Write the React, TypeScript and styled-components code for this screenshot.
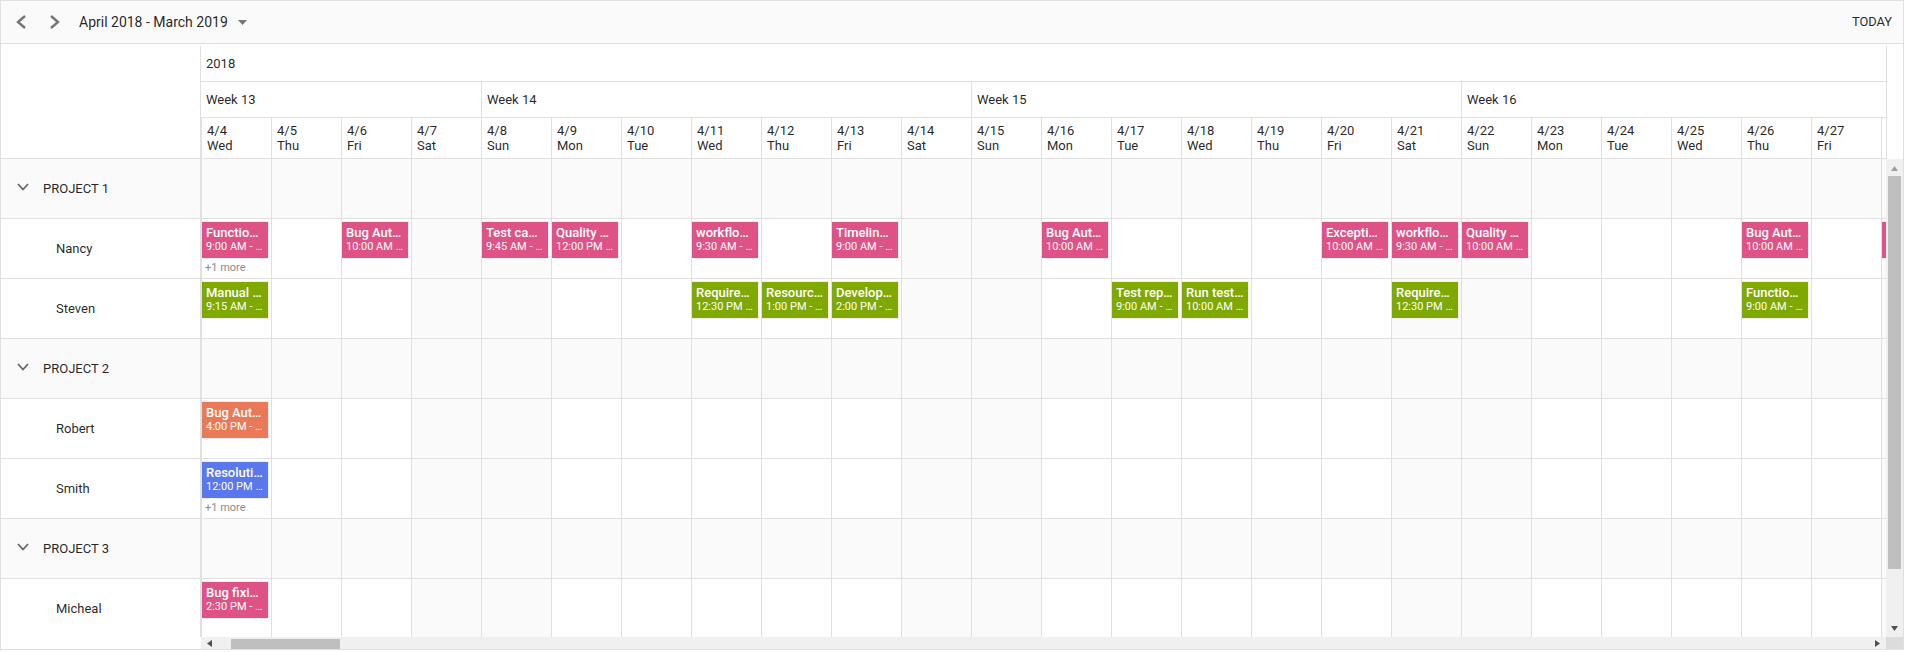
import React from "react";
import styled, { createGlobalStyle } from "styled-components";

const Global = createGlobalStyle`
  html, body { margin: 0; padding: 0; background: #fff; }
  body { font-family: Roboto, "Liberation Sans", sans-serif; color: rgba(0,0,0,.87); }
`;

const LINE = "#e0e0e0";
const SHADE = "#fafafa";

const Scheduler = styled.div`
  box-sizing: border-box;
  width: 1904px;
  height: 650px;
  border: 1px solid ${LINE};
  display: flex;
  flex-direction: column;
  overflow: hidden;
`;

const Toolbar = styled.div`
  box-sizing: border-box;
  flex: none;
  height: 43px;
  background: ${SHADE};
  border-bottom: 1px solid ${LINE};
  display: flex;
  align-items: center;
  padding: 0 11px 0 15px;
`;
const NavButton = styled.svg`
  flex: none;
  width: 10px;
  height: 14px;
  margin-right: ${(p: { $gap: number }) => p.$gap}px;
  fill: none;
  stroke: #757575;
  stroke-width: 2.4;
`;
const RangeLabel = styled.span`
  font-size: 14px;
  line-height: 20px;
`;
const Caret = styled.svg`
  flex: none;
  width: 9px;
  height: 5px;
  margin-left: 10px;
  fill: #757575;
`;
const Today = styled.span`
  margin-left: auto;
  font-size: 12.8px;
  line-height: 20px;
`;

const HeaderArea = styled.div`
  flex: none;
  display: flex;
  margin-top: 2px;
  height: 113px;
`;
const HeaderCorner = styled.div`
  box-sizing: border-box;
  flex: none;
  width: 200px;
  border-right: 1px solid ${LINE};
  border-bottom: 1px solid ${LINE};
`;
const HeaderRight = styled.div`
  box-sizing: border-box;
  flex: none;
  width: 1686px;
  border-right: 1px solid ${LINE};
  border-bottom: 1px solid ${LINE};
  overflow: hidden;
`;
const HeaderRow = styled.div`
  box-sizing: border-box;
  display: flex;
  height: ${(p: { $h: number }) => p.$h}px;
  border-bottom: 1px solid ${LINE};
  font-size: 13px;
`;
const DateRow = styled.div`
  display: flex;
  height: 40px;
  font-size: 13px;
  line-height: 15px;
`;
const YearCell = styled.div`
  padding-left: 5px;
  line-height: 35px;
`;
const WeekCell = styled.div`
  box-sizing: border-box;
  flex: none;
  width: ${(p: { $w: number }) => p.$w}px;
  padding-left: 5px;
  line-height: 35px;
  border-right: 1px solid ${LINE};
`;
const DateCell = styled.div<{ $first: boolean }>`
  box-sizing: border-box;
  flex: none;
  width: ${(p) => (p.$first ? 71 : 70)}px;
  padding: 5px 0 0 5px;
  border-right: 1px solid ${LINE};
  border-left: ${(p) => (p.$first ? `1px solid ${LINE}` : "none")};
`;

const Body = styled.div`
  flex: none;
  display: flex;
  height: 490px;
`;
const MainColumn = styled.div`
  flex: none;
  width: 1885px;
  display: flex;
  flex-direction: column;
`;
const RowsViewport = styled.div`
  flex: none;
  height: 478px;
  overflow: hidden;
`;
const Row = styled.div`
  display: flex;
  height: 60px;
  width: 3000px;
`;
const RowLabel = styled.div<{ $project: boolean }>`
  box-sizing: border-box;
  flex: none;
  width: 201px;
  display: flex;
  align-items: center;
  padding-left: ${(p) => (p.$project ? 16 : 55)}px;
  font-size: 13px;
  background: ${(p) => (p.$project ? SHADE : "#fff")};
  border-right: 2px solid ${LINE};
  border-bottom: 1px solid ${LINE};
  text-transform: ${(p) => (p.$project ? "uppercase" : "none")};
`;
const Expander = styled.svg`
  flex: none;
  width: 12px;
  height: 8px;
  margin: 0 14px 4px 0;
  fill: none;
  stroke: #666;
  stroke-width: 1.8;
`;
const Cell = styled.div<{ $shade: boolean }>`
  box-sizing: border-box;
  flex: none;
  width: 70px;
  padding-top: 2px;
  background: ${(p) => (p.$shade ? SHADE : "#fff")};
  border-right: 1px solid ${LINE};
  border-bottom: 1px solid ${LINE};
`;
const Appointment = styled.div<{ $color: string }>`
  box-sizing: border-box;
  width: 67px;
  height: 38px;
  padding: 4px 4px 0;
  color: #fff;
  background: ${(p) => p.$color};
  border: 1px solid #f1eff3;
  border-left: none;
`;
const Subject = styled.div`
  font-size: 13px;
  font-weight: 500;
  line-height: 15px;
  margin-top: -1px;
  white-space: nowrap;
  overflow: hidden;
  text-overflow: ellipsis;
`;
const TimeText = styled.div`
  font-size: 11px;
  line-height: 14px;
  white-space: nowrap;
  overflow: hidden;
  text-overflow: ellipsis;
`;
const More = styled.div`
  font-size: 11px;
  line-height: 15px;
  margin: 1px 0 0 3px;
  color: #8a8a8a;
`;

const HScroll = styled.div`
  flex: none;
  height: 12px;
  display: flex;
`;
const HSpacer = styled.div`
  flex: none;
  width: 200px;
`;
const HTrack = styled.div`
  flex: 1;
  display: flex;
  align-items: flex-end;
  background: #f0f0f0;
`;
const HThumb = styled.div`
  flex: none;
  width: 109px;
  height: 10px;
  margin-left: 19px;
  background: #bfbfbf;
`;
const Arrow = styled.svg<{ $left?: number; $right?: number; $top?: number; $bottom?: number; $fill: string; $auto?: boolean }>`
  flex: none;
  fill: ${(p) => p.$fill};
  margin: ${(p) => p.$top ?? 0}px ${(p) => p.$right ?? 0}px ${(p) => p.$bottom ?? 0}px ${(p) => p.$left ?? 0}px;
  ${(p) => (p.$auto ? "margin-left: auto;" : "")}
`;
const VScroll = styled.div`
  flex: none;
  width: 17px;
  display: flex;
  flex-direction: column;
`;
const VTrack = styled.div`
  flex: none;
  height: 478px;
  display: flex;
  flex-direction: column;
  align-items: center;
  background: #f0f0f0;
`;
const VThumb = styled.div`
  flex: none;
  width: 13px;
  height: 393px;
  margin-top: 5px;
  background: #bfbfbf;
`;
const ScrollCorner = styled.div`
  flex: none;
  height: 12px;
  background: #dcdcdc;
`;

const PINK = "#df5286";
const GREEN = "#7fa900";
const ORANGE = "#ea7a57";
const BLUE = "#5978ee";

type Ev = { col: number; title: string; time: string; more?: boolean };
type RowData = { label: string; project?: boolean; color?: string; events?: Ev[] };

const rows: RowData[] = [
  { label: "Project 1", project: true },
  {
    label: "Nancy",
    color: PINK,
    events: [
      { col: 0, title: "Functional Testing", time: "9:00 AM - 11:00 AM", more: true },
      { col: 2, title: "Bug Automation", time: "10:00 AM - 12:00 PM" },
      { col: 4, title: "Test case correction", time: "9:45 AM - 11:00 AM" },
      { col: 5, title: "Quality Analysis", time: "12:00 PM - 2:00 PM" },
      { col: 7, title: "workflow Analysis", time: "9:30 AM - 11:00 AM" },
      { col: 9, title: "Timeline estimation", time: "9:00 AM - 11:00 AM" },
      { col: 12, title: "Bug Automation", time: "10:00 AM - 12:00 PM" },
      { col: 16, title: "Exception handling", time: "10:00 AM - 12:00 PM" },
      { col: 17, title: "workflow Analysis", time: "9:30 AM - 11:00 AM" },
      { col: 18, title: "Quality Analysis", time: "10:00 AM - 12:00 PM" },
      { col: 22, title: "Bug Automation", time: "10:00 AM - 12:00 PM" },
      { col: 24, title: "", time: "" },
    ],
  },
  {
    label: "Steven",
    color: GREEN,
    events: [
      { col: 0, title: "Manual testing", time: "9:15 AM - 11:00 AM" },
      { col: 7, title: "Requirement planning", time: "12:30 PM - 2:00 PM" },
      { col: 8, title: "Resource planning", time: "1:00 PM - 3:00 PM" },
      { col: 9, title: "Development", time: "2:00 PM - 4:00 PM" },
      { col: 13, title: "Test report validation", time: "9:00 AM - 11:00 AM" },
      { col: 14, title: "Run test cases", time: "10:00 AM - 12:00 PM" },
      { col: 17, title: "Requirement planning", time: "12:30 PM - 2:00 PM" },
      { col: 22, title: "Functional testing", time: "9:00 AM - 11:00 AM" },
    ],
  },
  { label: "Project 2", project: true },
  { label: "Robert", color: ORANGE, events: [{ col: 0, title: "Bug Automation", time: "4:00 PM - 6:00 PM" }] },
  { label: "Smith", color: BLUE, events: [{ col: 0, title: "Resolution-based testing", time: "12:00 PM - 2:00 PM", more: true }] },
  { label: "Project 3", project: true },
  { label: "Micheal", color: PINK, events: [{ col: 0, title: "Bug fixing and validation", time: "2:30 PM - 4:00 PM" }] },
];

const DOW = ["Wed", "Thu", "Fri", "Sat", "Sun", "Mon", "Tue"];
const days = Array.from({ length: 25 }, (_, i) => ({ date: `4/${i + 4}`, dow: DOW[i % 7], weekend: i % 7 === 3 || i % 7 === 4 }));
const weeks = [
  { label: "Week 13", w: 281 },
  { label: "Week 14", w: 490 },
  { label: "Week 15", w: 490 },
  { label: "Week 16", w: 490 },
];

export default function App() {
  return (
    <>
      <Global />
      <Scheduler>
        <Toolbar>
          <NavButton $gap={24} viewBox="0 0 10 14">
            <polyline points="9,1 2,7 9,13" />
          </NavButton>
          <NavButton $gap={19} viewBox="0 0 10 14">
            <polyline points="1,1 8,7 1,13" />
          </NavButton>
          <RangeLabel>April 2018 - March 2019</RangeLabel>
          <Caret viewBox="0 0 9 5">
            <polygon points="0,0 9,0 4.5,5" />
          </Caret>
          <Today>TODAY</Today>
        </Toolbar>
        <HeaderArea>
          <HeaderCorner />
          <HeaderRight>
            <HeaderRow $h={36}>
              <YearCell>2018</YearCell>
            </HeaderRow>
            <HeaderRow $h={36}>
              {weeks.map((w) => (
                <WeekCell key={w.label} $w={w.w}>
                  {w.label}
                </WeekCell>
              ))}
            </HeaderRow>
            <DateRow>
              {days.map((d, i) => (
                <DateCell key={d.date} $first={i === 0}>
                  {d.date}
                  <br />
                  {d.dow}
                </DateCell>
              ))}
            </DateRow>
          </HeaderRight>
        </HeaderArea>
        <Body>
          <MainColumn>
            <RowsViewport>
              {rows.map((r) => (
                <Row key={r.label}>
                  <RowLabel $project={!!r.project}>
                    {r.project && (
                      <Expander viewBox="0 0 12 8">
                        <polyline points="1,1 6,6.5 11,1" />
                      </Expander>
                    )}
                    {r.label}
                  </RowLabel>
                  {days.map((d, i) => {
                    const ev = r.events?.find((e) => e.col === i);
                    return (
                      <Cell key={d.date} $shade={!!r.project || d.weekend}>
                        {ev && (
                          <Appointment $color={r.color ?? PINK}>
                            <Subject>{ev.title}</Subject>
                            <TimeText>{ev.time}</TimeText>
                          </Appointment>
                        )}
                        {ev?.more && <More>+1 more</More>}
                      </Cell>
                    );
                  })}
                </Row>
              ))}
            </RowsViewport>
            <HScroll>
              <HSpacer />
              <HTrack>
                <Arrow width="5" height="7" viewBox="0 0 5 7" $fill="#505050" $left={6} $bottom={2}>
                  <polygon points="5,0 5,7 0,3.5" />
                </Arrow>
                <HThumb />
                <Arrow width="5" height="7" viewBox="0 0 5 7" $fill="#505050" $auto $right={6} $bottom={2}>
                  <polygon points="0,0 0,7 5,3.5" />
                </Arrow>
              </HTrack>
            </HScroll>
          </MainColumn>
          <VScroll>
            <VTrack>
              <Arrow width="7" height="5" viewBox="0 0 7 5" $fill="#9e9e9e" $top={7}>
                <polygon points="0,5 7,5 3.5,0" />
              </Arrow>
              <VThumb />
              <Arrow width="7" height="5" viewBox="0 0 7 5" $fill="#505050" $top={57}>
                <polygon points="0,0 7,0 3.5,5" />
              </Arrow>
            </VTrack>
            <ScrollCorner />
          </VScroll>
        </Body>
      </Scheduler>
    </>
  );
}
